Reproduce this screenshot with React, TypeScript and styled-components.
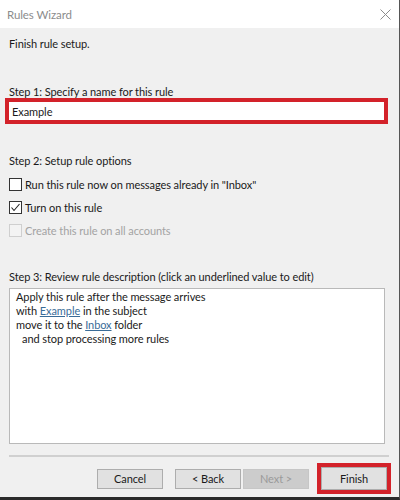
import styled, { createGlobalStyle } from "styled-components";

const GlobalStyle = createGlobalStyle`
  html, body {
    margin: 0;
    padding: 0;
    background: #f0f0f0;
  }
`;

const Window = styled.div`
  width: 400px;
  height: 500px;
  box-sizing: border-box;
  display: flex;
  flex-direction: column;
  background: #f0f0f0;
  border-right: 1px solid #555;
  border-bottom: 3px solid #2b2b2b;
  font-family: Lato, "Open Sans", sans-serif;
  font-size: 11px;
  letter-spacing: -0.08px;
  color: #1a1a1a;
`;

const TitleBar = styled.div`
  height: 28px;
  flex-shrink: 0;
  display: flex;
  align-items: center;
  justify-content: space-between;
  padding: 0 8px 0 7px;
  background: #fff;
  color: #8c8c8c;
  font-size: 11.5px;
`;

const CloseIcon = styled.svg`
  width: 11px;
  height: 11px;
`;

const Body = styled.div`
  flex: 1;
  display: flex;
  flex-direction: column;
  padding: 8px 11px 0 9px;
`;

const Intro = styled.div`
  line-height: 16px;
`;

const StepLabel = styled.div<{ $gap: number }>`
  margin-top: ${(p) => p.$gap}px;
  line-height: 14px;
`;

const NameFrame = styled.div`
  margin: -1px 0 0 -4px;
  width: 383px;
  height: 26px;
  box-sizing: border-box;
  border: 4px solid #d3222a;
  background: #fff;
  display: flex;
  align-items: center;
  padding-left: 3px;
`;

const Options = styled.div`
  margin-top: 8px;
  display: flex;
  flex-direction: column;
  gap: 7px;
`;

const OptionRow = styled.div<{ $disabled?: boolean }>`
  display: flex;
  align-items: center;
  gap: 3px;
  height: 16px;
  color: ${(p) => (p.$disabled ? "#a3a3a3" : "#1a1a1a")};
`;

const CheckBox = styled.span<{ $disabled?: boolean }>`
  width: 13px;
  height: 13px;
  box-sizing: border-box;
  border: 1px solid ${(p) => (p.$disabled ? "#cfcfcf" : "#333")};
  background: ${(p) => (p.$disabled ? "#f3f3f3" : "#fff")};
  display: flex;
  align-items: center;
  justify-content: center;
`;

const Description = styled.div`
  margin-top: 4px;
  width: 376px;
  height: 156px;
  box-sizing: border-box;
  border: 1px solid #b9b9b9;
  background: #fff;
  padding: 1px 6px;
  line-height: 14px;
`;

const DescLine = styled.div<{ $indent?: boolean }>`
  padding-left: ${(p) => (p.$indent ? 6 : 0)}px;
`;

const Link = styled.span`
  color: #3a6c98;
  text-decoration: underline;
`;

const Separator = styled.div`
  margin-top: 11px;
  width: 380px;
  height: 2px;
  background: #d0d0d0;
`;

const ButtonRow = styled.div`
  margin: 6px -3px 0 0;
  display: flex;
  align-items: center;
  justify-content: flex-end;
`;

const Button = styled.div<{ $disabled?: boolean; $gap?: number }>`
  width: 66px;
  height: 20px;
  box-sizing: border-box;
  margin-left: ${(p) => p.$gap ?? 0}px;
  display: flex;
  align-items: center;
  justify-content: center;
  border: 1px solid ${(p) => (p.$disabled ? "#c6c6c6" : "#adadad")};
  background: ${(p) => (p.$disabled ? "#cccccc" : "#e1e1e1")};
  color: ${(p) => (p.$disabled ? "#9a9a9a" : "#1a1a1a")};
`;

const Highlight = styled.div`
  margin-left: 8px;
  box-sizing: border-box;
  width: 74px;
  height: 31px;
  border: 4px solid #d3222a;
  display: flex;
`;

const FinishButton = styled(Button)`
  height: 23px;
`;

const Check = () => (
  <svg width="11" height="11" viewBox="0 0 11 11">
    <polyline points="1.5,5.5 4,8.5 9.5,2" fill="none" stroke="#222" strokeWidth="1.1" />
  </svg>
);

const App = () => {
  return (
    <>
      <GlobalStyle />
      <Window>
        <TitleBar>
          <span>Rules Wizard</span>
          <CloseIcon viewBox="0 0 11 11">
            <path d="M0.5 0.5 L10.5 10.5 M10.5 0.5 L0.5 10.5" stroke="#8c8c8c" strokeWidth="1" />
          </CloseIcon>
        </TitleBar>
        <Body>
          <Intro>Finish rule setup.</Intro>
          <StepLabel $gap={33}>Step 1: Specify a name for this rule</StepLabel>
          <NameFrame>Example</NameFrame>
          <StepLabel $gap={30}>Step 2: Setup rule options</StepLabel>
          <Options>
            <OptionRow>
              <CheckBox />
              Run this rule now on messages already in "Inbox"
            </OptionRow>
            <OptionRow>
              <CheckBox>
                <Check />
              </CheckBox>
              Turn on this rule
            </OptionRow>
            <OptionRow $disabled>
              <CheckBox $disabled />
              Create this rule on all accounts
            </OptionRow>
          </Options>
          <StepLabel $gap={32}>
            Step 3: Review rule description (click an underlined value to edit)
          </StepLabel>
          <Description>
            <DescLine>Apply this rule after the message arrives</DescLine>
            <DescLine>
              with <Link>Example</Link> in the subject
            </DescLine>
            <DescLine>
              move it to the <Link>Inbox</Link> folder
            </DescLine>
            <DescLine $indent>and stop processing more rules</DescLine>
          </Description>
          <Separator />
          <ButtonRow>
            <Button>Cancel</Button>
            <Button $gap={12}>&lt; Back</Button>
            <Button $gap={2} $disabled>
              Next &gt;
            </Button>
            <Highlight>
              <FinishButton>Finish</FinishButton>
            </Highlight>
          </ButtonRow>
        </Body>
      </Window>
    </>
  );
};

export default App;
